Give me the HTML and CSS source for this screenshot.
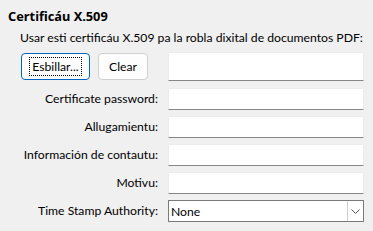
FILE: index.html
```html
<!DOCTYPE html>
<html lang="ast">
<head>
    <meta charset="UTF-8">
    <title>Certificáu X.509</title>
    <link rel="stylesheet" href="styles.css">
</head>
<body>

    <div class="panel">
        <h1 class="title">Certificáu X.509</h1>
        <p class="intro">Usar esti certificáu X.509 pa la robla dixital de documentos PDF:</p>

        <div class="form">
            <!-- fila de botones -->
            <div class="buttons">
                <button class="btn btn-default"><span class="focus">Esbillar...</span></button>
                <button class="btn">Clear</button>
            </div>
            <div class="field field-tall"></div>

            <label class="label">Certificate password:</label>
            <div class="field"></div>

            <label class="label">Allugamientu:</label>
            <div class="field"></div>

            <label class="label">Información de contautu:</label>
            <div class="field"></div>

            <label class="label">Motivu:</label>
            <div class="field"></div>

            <label class="label">Time Stamp Authority:</label>
            <div class="combo">
                <span class="combo-value">None</span>
                <span class="combo-arrow">
                    <svg width="9" height="5" viewBox="0 0 9 5"><path d="M0.5 0.5 L4.5 4.5 L8.5 0.5" fill="none" stroke="#555" stroke-width="1"/></svg>
                </span>
            </div>
        </div>
    </div>

</body>
</html>
```

FILE: styles.css
```css
body {
    margin: 0;
    background-color: #f0f0f0;
    font-family: Lato, "Open Sans", sans-serif;
    font-size: 12.2px;
    color: #000;
}

.panel {
    padding: 8px 0 0 0;
    width: 373px;
}

.title {
    font-family: "Noto Sans", sans-serif;
    font-size: 12.8px;
    font-weight: bold;
    margin: 0 0 0 8px;
    line-height: 16px;
}

.intro {
    margin: 6px 0 0 20px;
    line-height: 16px;
    white-space: nowrap;
}

.form {
    display: grid;
    grid-template-columns: 158px 196px;
    column-gap: 10px;
    row-gap: 6px;
    margin-top: 6px;
    align-items: center;
}

.buttons {
    display: flex;
    gap: 8px;
    padding-left: 21px;
    margin-bottom: 1px;
}

.btn {
    font-family: inherit;
    font-size: 12.2px;
    height: 27px;
    padding: 0 10px;
    background-color: #fdfdfd;
    border: 1px solid #d0d0d0;
    border-radius: 4px;
    color: #000;
}

.btn-default {
    width: 69px;
    border-color: #0067c0;
    padding: 0;
}

.focus {
    display: inline-block;
    border: 1px dotted #000;
    padding: 1px 2px;
    line-height: 15px;
}

.label {
    text-align: right;
    line-height: 16px;
    white-space: nowrap;
}

.field {
    height: 20px;
    background-color: #fff;
    border: 1px solid #ececec;
    border-bottom: 1px solid #868686;
}

.field-tall {
    height: 27px;
    margin-bottom: 1px;
}

.combo {
    display: flex;
    align-items: center;
    justify-content: space-between;
    height: 20px;
    background-color: #fff;
    border: 1px solid #7a7a7a;
}

.combo-value {
    padding-left: 2px;
}

.combo-arrow {
    display: flex;
    align-items: center;
    justify-content: center;
    width: 16px;
    height: 20px;
    border-left: 1px solid #cfcfcf;
    box-sizing: border-box;
}
```
